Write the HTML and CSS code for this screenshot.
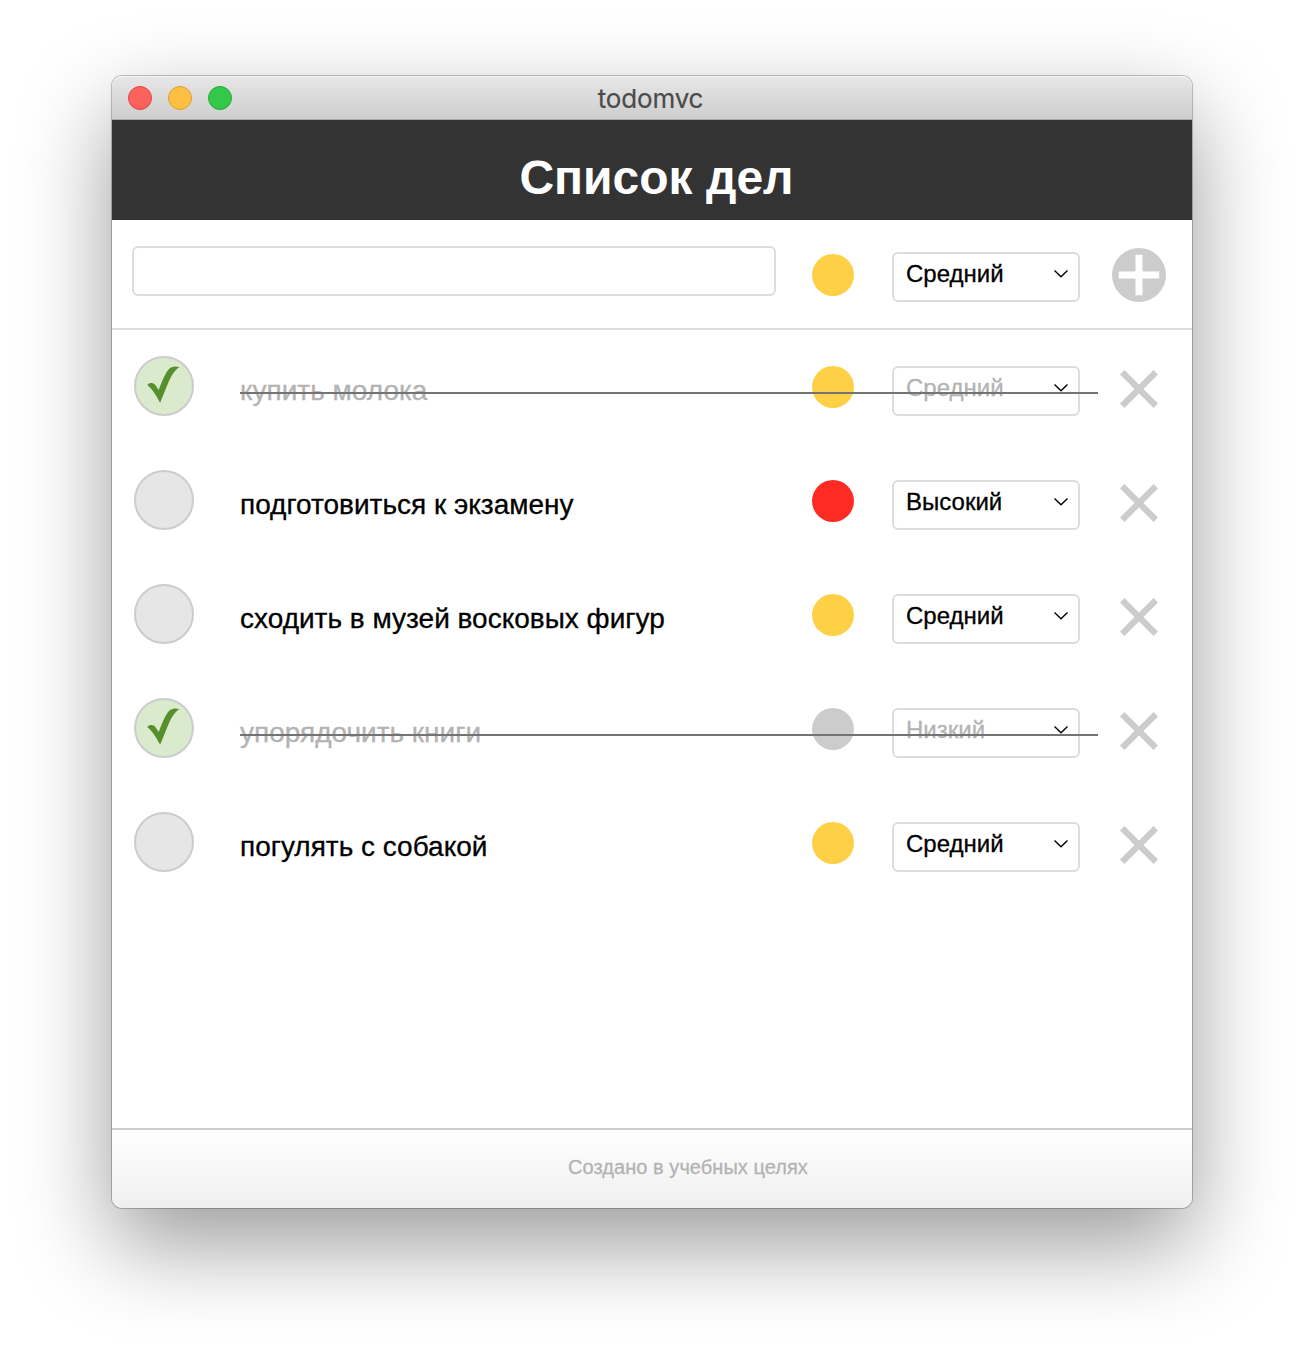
FILE: index.html
```html
<!DOCTYPE html>
<html lang="ru">
<head>
<meta charset="utf-8">
<title>todomvc</title>
<link rel="stylesheet" href="styles.css">
</head>
<body>
<svg class="defs" width="0" height="0" aria-hidden="true">
  <symbol id="chevron" viewBox="0 0 16 10"><path d="M1.5 1.600 8 7.800 14.500 1.600" fill="none" stroke="#000" stroke-width="1.4"/></symbol>
  <symbol id="cross" viewBox="0 0 38 38"><path d="M2.2 2.2 35.8 35.8M35.8 2.2 2.2 35.8" fill="none" stroke="#ccc" stroke-width="6.2"/></symbol>
  <symbol id="check" viewBox="0 0 60 60"><path d="M13.3 28.9C16 26.300 19.500 26.500 21.500 29.300L24.700 34C28 25.500 31 17.500 35 13C37.500 10.200 41.500 9.800 45.300 11.200C41.500 13.500 38.500 17.500 35 25C32 32 29.500 38.500 26.100 46.800C23 40.500 18.500 33 13.300 28.900Z" fill="#568f2c"/></symbol>
</svg>
<div class="window">
  <div class="titlebar">
    <div class="lights"><i class="light close"></i><i class="light minimize"></i><i class="light zoom"></i></div>
    <span class="window-title">todomvc</span>
  </div>
  <header class="header"><h1>Список дел</h1></header>
  <form class="new-item">
    <input class="field" type="text">
    <i class="dot medium"></i>
    <div class="select"><span>Средний</span><svg class="chevron"><use href="#chevron"/></svg></div>
    <svg class="add" viewBox="0 0 54 54"><circle cx="27" cy="27" r="27" fill="#ccc"/><path d="M6.800 27H47.200M27 6.800V47.200" stroke="#fff" stroke-width="7"/></svg>
  </form>
  <ul class="list">
    <li class="item done">
      <span class="toggle"><svg class="check"><use href="#check"/></svg></span>
      <span class="text">купить молока</span>
      <i class="dot medium"></i>
      <div class="select"><span>Средний</span><svg class="chevron"><use href="#chevron"/></svg></div>
      <svg class="remove"><use href="#cross"/></svg>
    </li>
    <li class="item">
      <span class="toggle"></span>
      <span class="text">подготовиться к экзамену</span>
      <i class="dot high"></i>
      <div class="select"><span>Высокий</span><svg class="chevron"><use href="#chevron"/></svg></div>
      <svg class="remove"><use href="#cross"/></svg>
    </li>
    <li class="item">
      <span class="toggle"></span>
      <span class="text">сходить в музей восковых фигур</span>
      <i class="dot medium"></i>
      <div class="select"><span>Средний</span><svg class="chevron"><use href="#chevron"/></svg></div>
      <svg class="remove"><use href="#cross"/></svg>
    </li>
    <li class="item done">
      <span class="toggle"><svg class="check"><use href="#check"/></svg></span>
      <span class="text">упорядочить книги</span>
      <i class="dot low"></i>
      <div class="select"><span>Низкий</span><svg class="chevron"><use href="#chevron"/></svg></div>
      <svg class="remove"><use href="#cross"/></svg>
    </li>
    <li class="item">
      <span class="toggle"></span>
      <span class="text">погулять с собакой</span>
      <i class="dot medium"></i>
      <div class="select"><span>Средний</span><svg class="chevron"><use href="#chevron"/></svg></div>
      <svg class="remove"><use href="#cross"/></svg>
    </li>
  </ul>
  <footer class="footer">Создано в учебных целях</footer>
</div>
</body>
</html>
```
FILE: styles.css
```css
* { box-sizing: border-box; }
html { background: #fff; }
body {
  margin: 0;
  height: 1356px;
  padding: 76px 112px 0;
  overflow: hidden;
  font-family: "Liberation Sans", Arial, sans-serif;
  color: #000;
}
.defs { position: absolute; }
.window {
  display: flex;
  flex-direction: column;
  width: 1080px;
  height: 1132px;
  border-radius: 10px;
  background: #fff;
  box-shadow: 0 0 0 1px rgba(0, 0, 0, .2), 0 0 2px rgba(0, 0, 0, .15), 0 36px 92px rgba(0, 0, 0, .4);
}
.titlebar {
  display: grid;
  grid-template-columns: 1fr auto 1fr;
  height: 44px;
  padding: 0 19px 0 16px;
  border-radius: 10px 10px 0 0;
  border-bottom: 1px solid #a9a9a9;
  background: linear-gradient(#e7e7e7, #cecece);
  box-shadow: inset 0 1px 0 #f4f4f4;
}
.lights { display: flex; gap: 16px; padding-top: 10px; }
.light { width: 24px; height: 24px; border-radius: 50%; border: 1px solid; }
.close { background: #fd615c; border-color: #e24640; }
.minimize { background: #fdbe41; border-color: #e0a033; }
.zoom { background: #34c84a; border-color: #24ab36; }
.window-title {
  font: 26px/32px Inter, sans-serif;
  padding-top: 7px;
  letter-spacing: -.15px;
  color: #4b4b4b;
  -webkit-text-stroke: .2px;
}
.header { height: 100px; padding: 31px 0 0 9px; background: #333; text-align: center; }
.header h1 { margin: 0; font-size: 48px; line-height: 54px; color: #fff; }
.new-item {
  display: grid;
  grid-template-columns: 680px 80px 220px 54px;
  height: 110px;
  padding: 26px 0 0 20px;
  border-bottom: 2px solid #ddd;
  align-items: start;
}
.field { width: 644px; height: 50px; padding: 0 12px; border: 2px solid #ddd; border-radius: 6px; background: #fff; font-size: 28px; outline: none; }
.dot { width: 42px; height: 42px; border-radius: 50%; }
.medium { background: #fed045; }
.high { background: #fe2a24; }
.low { background: #ccc; }
.select {
  display: flex;
  justify-content: space-between;
  width: 188px;
  height: 50px;
  padding: 6px 9px 0 12px;
  border: 2px solid #ddd;
  border-radius: 6px;
  font-size: 24px;
  line-height: 28px;
  -webkit-text-stroke: .3px;
}
.chevron { width: 16px; height: 10px; margin-top: 9px; }
.new-item .dot { margin-top: 8px; }
.new-item .select { margin-top: 6px; }
.add { width: 54px; height: 54px; margin-top: 2px; }
.list { flex: 1; margin: 0; padding: 0; list-style: none; }
.item {
  position: relative;
  display: grid;
  grid-template-columns: 106px 572px 80px 228px 38px;
  align-items: start;
  height: 114px;
  padding: 26px 0 0 22px;
}
.toggle { width: 60px; height: 60px; border: 2px solid #ccc; border-radius: 50%; background: #e6e6e6; }
.done .toggle { background: #d9eacd; }
.check { display: block; width: 60px; height: 60px; margin: -2px; }
.text { padding-top: 19px; font-size: 28px; line-height: 32px; white-space: nowrap; -webkit-text-stroke: .3px; }
.item .dot, .item .select { margin-top: 10px; }
.remove { width: 38px; height: 38px; margin-top: 14px; }
.done .text, .done .select { color: #b3b3b3; }
/* Strikes a finished task through, from its text to its priority */
.done::after {
  content: "";
  position: absolute;
  left: 128px;
  top: 62px;
  width: 858px;
  height: 2px;
  background: #737373;
}
.footer {
  height: 80px;
  padding: 25px 0 0 72px;
  border-top: 2px solid #ccc;
  border-radius: 0 0 10px 10px;
  background: linear-gradient(#fff, #efefef);
  text-align: center;
  font-size: 20px;
  line-height: 24px;
  letter-spacing: .05px;
  color: #b3b3b3;
  -webkit-text-stroke: .3px;
}
```
